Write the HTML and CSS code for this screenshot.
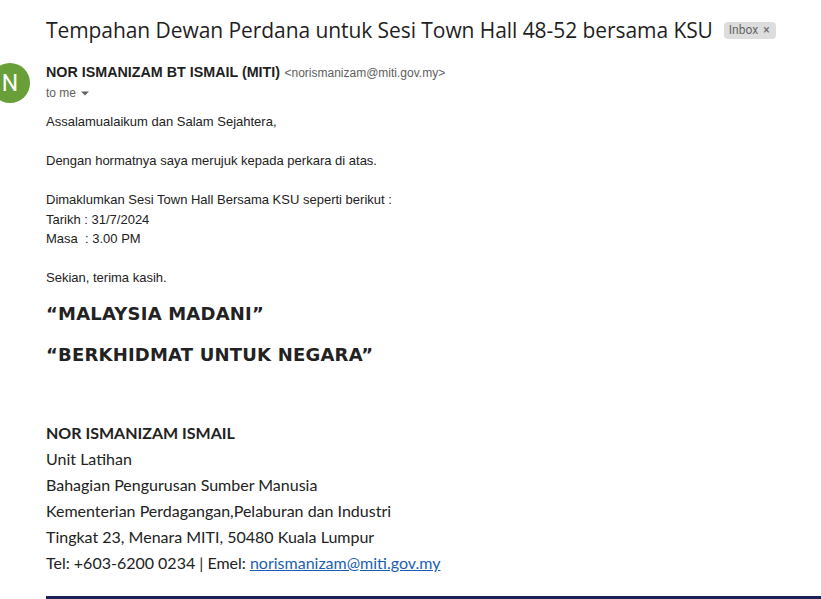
FILE: index.html
```html
<!DOCTYPE html>
<html>
<head>
<meta charset="utf-8">
<link rel="stylesheet" href="styles.css">
</head>
<body>
<div class="page">
  <div class="subject-row">
    <h1 class="subject">Tempahan Dewan Perdana untuk Sesi Town Hall 48-52 bersama KSU</h1>
    <span class="label">Inbox <span class="x">×</span></span>
  </div>
  <div class="message">
    <div class="avatar">N</div>
    <div class="content">
      <div class="sender"><span class="name">NOR ISMANIZAM BT ISMAIL (MITI)</span> <span class="addr">&lt;norismanizam@miti.gov.my&gt;</span></div>
      <div class="tome">to me <svg class="caret" width="10" height="10" viewBox="0 0 10 10"><path d="M1 3.5 L9 3.5 L5 7.5 Z" fill="#5f6368"/></svg></div>
      <div class="body">
        <p>Assalamualaikum dan Salam Sejahtera,</p>
        <p>&nbsp;</p>
        <p>Dengan hormatnya saya merujuk kepada perkara di atas.</p>
        <p>&nbsp;</p>
        <p>Dimaklumkan Sesi Town Hall Bersama KSU seperti berikut :</p>
        <p>Tarikh : 31/7/2024</p>
        <p>Masa &nbsp;: 3.00 PM</p>
        <p>&nbsp;</p>
        <p>Sekian, terima kasih.</p>
      </div>
      <div class="motto">
        <p>“MALAYSIA MADANI”</p>
        <p>“BERKHIDMAT UNTUK NEGARA”</p>
      </div>
      <div class="sig">
        <p class="sig-name">NOR ISMANIZAM ISMAIL</p>
        <p>Unit Latihan</p>
        <p>Bahagian Pengurusan Sumber Manusia</p>
        <p>Kementerian Perdagangan,Pelaburan dan Industri</p>
        <p>Tingkat 23, Menara MITI, 50480 Kuala Lumpur</p>
        <p>Tel: +603-6200 0234 | Emel: <a href="#">norismanizam@miti.gov.my</a></p>
      </div>
      <div class="rule"></div>
    </div>
  </div>
</div>
</body>
</html>
```
FILE: styles.css
```css
html, body {
  margin: 0;
  padding: 0;
  background: #fff;
  overflow: hidden;
}
.page {
  width: 821px;
  height: 599px;
  overflow: hidden;
}
p { margin: 0; }
.subject-row {
  display: flex;
  align-items: center;
  padding: 15px 0 0 46px;
  height: 30px;
}
.subject {
  margin: 0;
  font-family: "Open Sans", sans-serif;
  font-weight: 400;
  font-size: 21px;
  color: #1f1f1f;
  letter-spacing: -0.07px;
  white-space: nowrap;
}
.label {
  margin-left: 11px;
  background: #dddddd;
  color: #666;
  font-family: "Roboto", sans-serif;
  font-size: 12px;
  padding: 1px 6px 2px 5px;
  border-radius: 4px;
  line-height: 14px;
}
.label .x { font-size: 12px; margin-left: 2px; }
.message {
  display: flex;
  margin-top: 17px;
}
.avatar {
  flex: none;
  width: 40px;
  height: 40px;
  border-radius: 50%;
  background: #689f38;
  color: #fff;
  font-family: "Roboto", sans-serif;
  font-size: 23px;
  display: flex;
  align-items: center;
  justify-content: center;
  margin-left: -10px;
  margin-top: 1px;
}
.content {
  margin-left: 16px;
  flex: 1;
}
.sender {
  font-family: "Liberation Sans", Arial, sans-serif;
  line-height: 18px;
  margin-top: 1px;
}
.name {
  font-weight: 700;
  font-size: 14.3px;
  color: #1f1f1f;
}
.addr {
  font-size: 12px;
  color: #5e5e5e;
}
.tome {
  font-family: "Liberation Sans", Arial, sans-serif;
  font-size: 12px;
  color: #5e5e5e;
  line-height: 16px;
  margin-top: 3px;
  display: flex;
  align-items: center;
  gap: 4px;
}
.body {
  margin-top: 11px;
  font-family: "Liberation Sans", Arial, sans-serif;
  font-size: 13px;
  color: #222;
  line-height: 19.5px;
}
.motto {
  margin-top: 14px;
  font-family: "DejaVu Sans", Verdana, sans-serif;
  font-weight: 700;
  font-size: 18px;
  color: #222;
  letter-spacing: 0.2px;
}
.motto p { line-height: 24px; margin-bottom: 17px; }
.sig {
  margin-top: 53px;
  font-family: "Lato", sans-serif;
  font-size: 16px;
  color: #222;
  line-height: 26px;
}
.sig-name { font-weight: 700; }
.sig a {
  color: #1a5fb4;
  text-decoration: underline;
}
.rule {
  margin-top: 20px;
  height: 3px;
  background: #1c2256;
}
```
